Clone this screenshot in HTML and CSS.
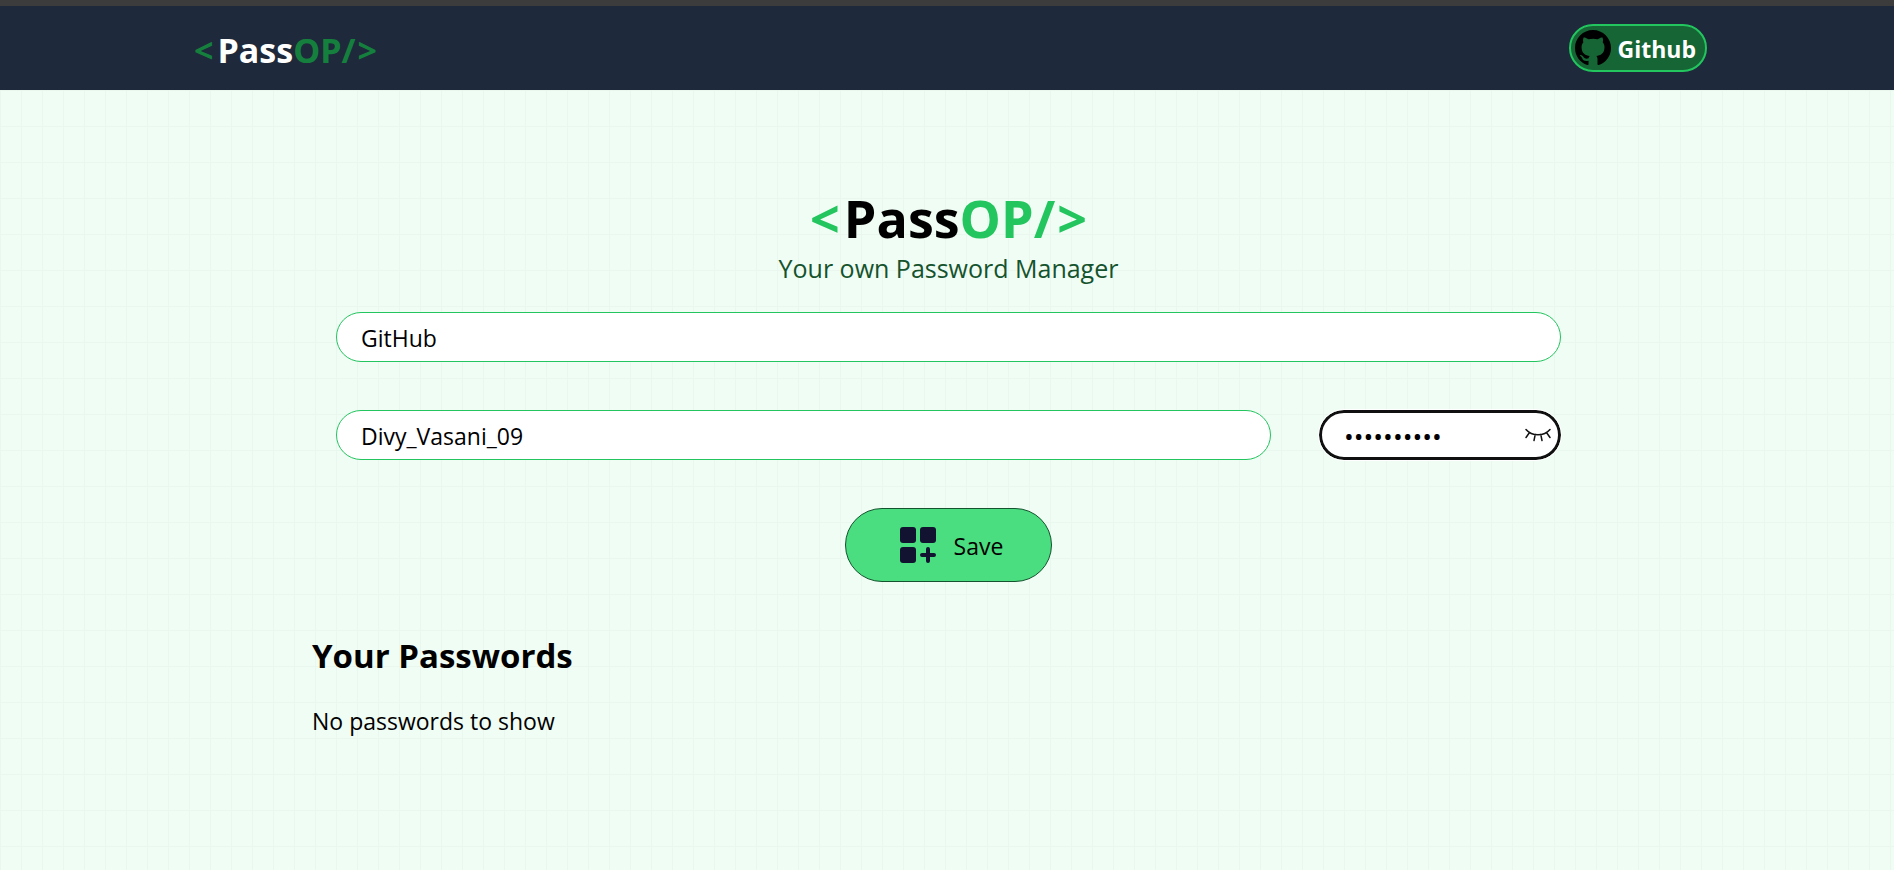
FILE: index.html
```html
<!DOCTYPE html>
<html lang="en">
<head>
<meta charset="utf-8">
<meta name="viewport" content="width=device-width, initial-scale=1">
<title>PassOP</title>
<link rel="stylesheet" href="styles.css">
</head>
<body>
<nav class="navbar">
  <div class="navbar-inner">
    <div class="logo"><span class="logo-green bracket">&lt;</span>Pass<span class="logo-green">OP/</span><span class="logo-green bracket-end">&gt;</span></div>
    <button class="github" type="button">
      <svg class="icon" viewBox="0 0 16 16" aria-hidden="true"><path d="M8 0C3.58 0 0 3.58 0 8c0 3.54 2.29 6.53 5.47 7.59.4.07.55-.17.55-.38 0-.19-.01-.82-.01-1.49-2.01.37-2.53-.49-2.69-.94-.09-.23-.48-.94-.82-1.13-.28-.15-.68-.52-.01-.53.63-.01 1.08.58 1.23.82.72 1.21 1.87.87 2.33.66.07-.52.28-.87.51-1.07-1.78-.2-3.64-.89-3.64-3.95 0-.87.31-1.59.82-2.15-.08-.2-.36-1.02.08-2.12 0 0 .67-.21 2.2.82.64-.18 1.32-.27 2-.27s1.36.09 2 .27c1.53-1.04 2.2-.82 2.2-.82.44 1.1.16 1.92.08 2.12.51.56.82 1.27.82 2.15 0 3.07-1.87 3.75-3.65 3.95.29.25.54.73.54 1.48 0 1.07-.01 1.93-.01 2.2 0 .21.15.46.55.38A8.01 8.01 0 0 0 16 8c0-4.42-3.58-8-8-8z"/></svg>
      <span>Github</span>
    </button>
  </div>
</nav>
<main class="page">
  <h1 class="title"><span class="title-green bracket">&lt;</span>Pass<span class="title-green">OP/</span><span class="title-green bracket-end">&gt;</span></h1>
  <p class="subtitle">Your own Password Manager</p>
  <form class="form">
    <input class="field" type="text" aria-label="Website" value="GitHub">
    <div class="row">
      <input class="field" type="text" aria-label="Username" value="Divy_Vasani_09">
      <div class="password">
        <input class="field field-focus" type="password" aria-label="Password" value="abcdefghij">
        <button class="eye" type="button" aria-label="Show password">
          <svg viewBox="0 0 26 14" aria-hidden="true"><path d="M1 1.500C7 8.500 19 8.500 25 1.500M4.500 4.500L1 9.500M21.500 4.500L25 9.500M10.200 6.600L9 12.500M15.800 6.600L17 12.500"/></svg>
        </button>
      </div>
    </div>
    <button class="save" type="button">
      <svg class="icon" viewBox="0 0 36 36" aria-hidden="true"><rect width="16" height="16" rx="3"/><rect x="20" width="16" height="16" rx="3"/><rect y="20" width="16" height="16" rx="3"/><path d="M28 22v12M22 28h12" fill="none" stroke="#121331" stroke-width="4" stroke-linecap="round"/></svg>
      <span>Save</span>
    </button>
  </form>
  <section class="passwords">
    <h2 class="heading">Your Passwords</h2>
    <p class="empty">No passwords to show</p>
  </section>
</main>
</body>
</html>
```
FILE: styles.css
```css
* { box-sizing: border-box; }

body {
  margin: 0;
  min-height: 100vh;
  display: flex;
  flex-direction: column;
  border-top: 6px solid #3c3c3c;
  font-family: "Open Sans", "Noto Sans", sans-serif;
  font-size: 23px;
  line-height: 36px;
  color: #000;
}

button, input { font: inherit; color: inherit; }
button { cursor: pointer; }
h1, h2, p { margin: 0; }

.navbar {
  background: #1e293b;
  color: #fff;
}

.navbar-inner {
  display: flex;
  align-items: center;
  justify-content: space-between;
  height: 84px;
  padding: 0 187px 0 194px;
}

.logo {
  padding-top: 4px;
  font-size: 34px;
  font-weight: 700;
}

.logo-green { color: #15803d; }
.bracket { margin-right: 4px; }
.bracket-end { margin-left: 2px; }

.icon {
  width: 36px;
  height: 36px;
  flex: none;
}

.github {
  display: flex;
  align-items: center;
  gap: 7px;
  height: 48px;
  padding: 0 9px 0 4px;
  border: 2px solid #22c55e;
  border-radius: 24px;
  background: #166534;
  font-weight: 700;
  color: #fff;
}

.page {
  flex: 1;
  padding: 96px 309px 48px 312px;
  background-color: #f0fdf4;
  background-image:
    linear-gradient(to right, #eaf7ef 1px, transparent 1px),
    linear-gradient(to bottom, #eaf7ef 1px, transparent 1px);
  background-size: 21px 36px;
}

.title {
  font-size: 52px;
  line-height: 64px;
  text-align: center;
}

.title-green { color: #22c55e; }

.subtitle {
  font-size: 25px;
  text-align: center;
  color: #14532d;
}

.form {
  display: flex;
  flex-direction: column;
  align-items: center;
  gap: 48px;
  padding: 26px 24px 0;
}

.field {
  width: 100%;
  min-width: 0;
  height: 50px;
  padding: 2px 24px 0;
  border: 1px solid #22c55e;
  border-radius: 25px;
  background: #fff;
}

.row {
  display: flex;
  gap: 48px;
  width: 100%;
}

.password {
  position: relative;
  flex: none;
  width: 242px;
}

.field-focus {
  padding: 2px 22px 0;
  border: 3px solid #101010;
  outline: 1px solid #fff;
  font-size: 26px;
}

.eye {
  position: absolute;
  top: 18px;
  right: 10px;
  display: flex;
  padding: 0;
  border: 0;
  background: none;
}

.eye svg {
  width: 26px;
  height: 14px;
  fill: none;
  stroke: #121212;
  stroke-width: 1.5;
  stroke-linecap: round;
}

.save {
  display: flex;
  align-items: center;
  justify-content: center;
  gap: 18px;
  width: 207px;
  height: 74px;
  padding: 0 0 0 6px;
  border: 1px solid #14532d;
  border-radius: 37px;
  background: #4ade80;
}

.save .icon { fill: #121331; }
.save span, .github span { padding-top: 2px; }

.heading {
  padding: 47px 0 20px;
  font-size: 33px;
  line-height: 54px;
}

@media (max-width: 1200px) {
  .navbar-inner { padding: 0 32px; }
  .page { padding: 96px 32px 48px; }
}
```
